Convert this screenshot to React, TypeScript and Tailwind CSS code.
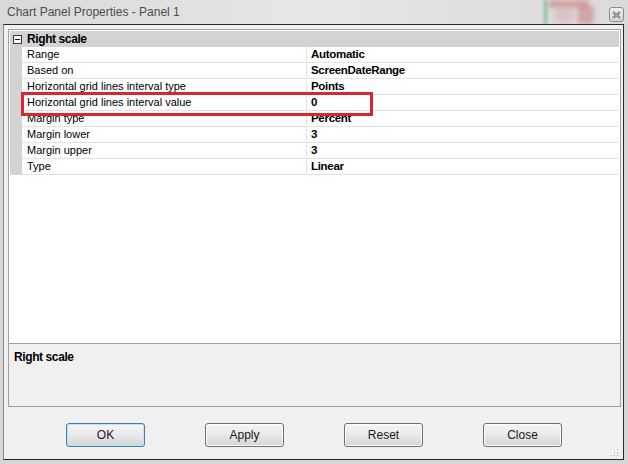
import React from "react";

const rows = [
  { label: "Range", value: "Automatic" },
  { label: "Based on", value: "ScreenDateRange" },
  { label: "Horizontal grid lines interval type", value: "Points" },
  { label: "Horizontal grid lines interval value", value: "0" },
  { label: "Margin type", value: "Percent" },
  { label: "Margin lower", value: "3" },
  { label: "Margin upper", value: "3" },
  { label: "Type", value: "Linear" },
];

const buttons = ["OK", "Apply", "Reset", "Close"];

function DlgButton({ label, focused }: { label: string; focused?: boolean }) {
  return (
    <button
      className={
        "w-[79px] h-[24px] rounded-[3px] border text-[12px] text-[#1a1a1a] bg-gradient-to-b from-[#f6f6f6] via-[#e9e9e9] to-[#d4d4d4] " +
        (focused ? "border-[#3c7fb1] shadow-[inset_0_0_0_1px_#bfe4f7]" : "border-[#707070] shadow-[inset_0_0_0_1px_#fcfcfc]")
      }
    >
      {label}
    </button>
  );
}

export default function App() {
  return (
    <div
      className="relative w-[628px] h-[464px] bg-[#d6d6d6] flex flex-col overflow-hidden"
      style={{ fontFamily: '"Liberation Sans", Arial, sans-serif' }}
    >
      {/* title bar */}
      <div className="relative h-[24px] shrink-0 bg-gradient-to-r from-[#d9d9d9] via-[#e6e6e6] to-[#dadada] overflow-hidden">
        <div className="absolute left-[543px] top-0 w-[5px] h-[24px] bg-[#7fc08a] opacity-60 blur-[1px]" />
        <div className="absolute left-[549px] top-0 w-[40px] h-[8px] bg-[#c86b6b] opacity-50 blur-[2px]" />
        <div className="absolute left-[578px] top-[6px] w-[16px] h-[18px] bg-[#c25a5a] opacity-40 blur-[2px]" />
        <div className="absolute left-[555px] top-[8px] w-[20px] h-[14px] bg-[#d79a9a] opacity-40 blur-[3px]" />
        <span className="absolute left-[7px] top-[5px] text-[12px] leading-[14px] text-[#4e4e4e]">
          Chart Panel Properties - Panel 1
        </span>
        <div className="absolute left-[609px] top-[7px] w-[15px] h-[15px] rounded-[3px] border border-[#8a8a8a] bg-gradient-to-b from-[#f0f0f0] to-[#d6d6d6] flex items-center justify-center">
          <svg width="9" height="8" viewBox="0 0 9 8">
            <path d="M1 1 L8 7 M8 1 L1 7" stroke="#5a5a5a" strokeWidth="2.2" />
            <path d="M1 1 L8 7 M8 1 L1 7" stroke="#f4f4f4" strokeWidth="0.7" />
          </svg>
        </div>
      </div>

      {/* client area */}
      <div className="relative flex-1 ml-[3px] mr-[4px] mb-[4px] border border-[#2b2b2b] border-l-[#8a8a8a] bg-[#f0f0f0] flex flex-col pt-[4px] pl-[4px] pr-[2px]">
        {/* property grid */}
        <div className="relative h-[315px] border border-[#a0a0a0] bg-white p-[1px] flex flex-col">
          <div className="h-[16px] bg-[#d3d3d3] flex items-center">
            <div className="w-[12px] flex justify-center ml-[1px]">
              <div className="w-[9px] h-[9px] border border-[#3a3a3a] bg-white flex items-center justify-center">
                <div className="w-[5px] h-[1px] bg-[#1a1a1a]" />
              </div>
            </div>
            <span className="ml-[4px] text-[12px] font-bold tracking-[-0.4px] text-black">Right scale</span>
          </div>
          {rows.map((r) => (
            <div key={r.label} className="h-[16px] flex">
              <div className="w-[12px] bg-[#d3d3d3]" />
              <div className="flex-1 flex border-b border-[#e3e3e3]">
                <div className="w-[285px] border-r border-[#e3e3e3] pl-[5px] text-[11px] leading-[15px] text-black whitespace-nowrap">
                  {r.label}
                </div>
                <div className="flex-1 pl-[4px] text-[11.5px] leading-[15px] font-bold tracking-[-0.3px] text-black">
                  {r.value}
                </div>
              </div>
            </div>
          ))}
          <div className="absolute left-[12px] top-[62px] w-[352px] h-[24px] border-[3px] border-[#dc2530]" />
        </div>

        {/* description */}
        <div className="h-[63px] border-x border-b border-[#a0a0a0] bg-[#f0f0f0] pl-[5px] pt-[6px]">
          <div className="text-[12px] leading-[14px] font-bold tracking-[-0.4px] text-black">Right scale</div>
        </div>

        {/* buttons */}
        <div className="relative flex-1 flex pt-[16px] pl-[58px] gap-[60px]">
          {buttons.map((b, i) => (
            <DlgButton key={b} label={b} focused={i === 0} />
          ))}
          <svg className="absolute right-[2px] bottom-[2px]" width="8" height="8" viewBox="0 0 8 8">
            <rect x="6" y="0" width="1" height="1" fill="#b8b8b8" />
            <rect x="3" y="3" width="1" height="1" fill="#b8b8b8" />
            <rect x="6" y="3" width="1" height="1" fill="#b8b8b8" />
            <rect x="0" y="6" width="1" height="1" fill="#b8b8b8" />
            <rect x="3" y="6" width="1" height="1" fill="#b8b8b8" />
            <rect x="6" y="6" width="1" height="1" fill="#b8b8b8" />
          </svg>
        </div>
      </div>
    </div>
  );
}
